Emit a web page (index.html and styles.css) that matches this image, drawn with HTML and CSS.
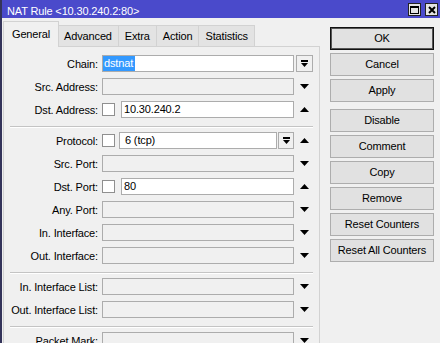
FILE: index.html
```html
<!DOCTYPE html>
<html>
<head>
  <title>NAT Rule</title>
  <link rel="stylesheet" href="styles.css">
</head>
<body>
  <div class="window">
    <div class="titlebar">
      <span class="title">NAT Rule &lt;10.30.240.2:80&gt;</span>
      <div class="wbtns">
        <span class="wbtn"><svg width="9" height="8" viewBox="0 0 9 8"><rect x="0.5" y="0.5" width="8" height="7" fill="none" stroke="#000"/><rect x="0" y="0" width="9" height="2" fill="#000"/></svg></span>
        <span class="wbtn"><svg width="8" height="8" viewBox="0 0 8 8"><path d="M1 1 L7 7 M7 1 L1 7" stroke="#000" stroke-width="2"/></svg></span>
      </div>
    </div>

    <div class="content">
      <div class="left">
        <div class="tabs">
          <div class="tab active">General</div>
          <div class="tab">Advanced</div>
          <div class="tab">Extra</div>
          <div class="tab">Action</div>
          <div class="tab">Statistics</div>
        </div>

        <div class="panel">
          <div class="row">
            <div class="lbl">Chain:</div>
            <div class="ctl"><div class="field on chain"><span class="sel">dstnat</span></div></div>
            <div class="side"><span class="dd chain-dd"><svg width="7" height="7" viewBox="0 0 7 7"><rect x="0" y="0" width="7" height="2" fill="#000"/><polygon points="0,3 7,3 3.5,7" fill="#000"/></svg></span></div>
          </div>
          <div class="row">
            <div class="lbl">Src. Address:</div>
            <div class="ctl"><div class="field"></div></div>
            <div class="side"><svg class="tri" width="9" height="5" viewBox="0 0 9 5"><polygon points="0,0 9,0 4.5,5" fill="#000"/></svg></div>
          </div>
          <div class="row">
            <div class="lbl">Dst. Address:</div>
            <div class="ctl"><span class="chk"></span><div class="field on">10.30.240.2</div></div>
            <div class="side"><svg class="tri" width="9" height="5" viewBox="0 0 9 5"><polygon points="0,5 9,5 4.5,0" fill="#000"/></svg></div>
          </div>

          <div class="sep"></div>

          <div class="row">
            <div class="lbl">Protocol:</div>
            <div class="ctl combo"><span class="chk"></span><div class="field on">6 (tcp)</div><span class="dd"><svg width="7" height="7" viewBox="0 0 7 7"><rect x="0" y="0" width="7" height="2" fill="#000"/><polygon points="0,3 7,3 3.5,7" fill="#000"/></svg></span></div>
            <div class="side"><svg class="tri" width="9" height="5" viewBox="0 0 9 5"><polygon points="0,5 9,5 4.5,0" fill="#000"/></svg></div>
          </div>
          <div class="row">
            <div class="lbl">Src. Port:</div>
            <div class="ctl"><div class="field"></div></div>
            <div class="side"><svg class="tri" width="9" height="5" viewBox="0 0 9 5"><polygon points="0,0 9,0 4.5,5" fill="#000"/></svg></div>
          </div>
          <div class="row">
            <div class="lbl">Dst. Port:</div>
            <div class="ctl"><span class="chk"></span><div class="field on">80</div></div>
            <div class="side"><svg class="tri" width="9" height="5" viewBox="0 0 9 5"><polygon points="0,5 9,5 4.5,0" fill="#000"/></svg></div>
          </div>
          <div class="row">
            <div class="lbl">Any. Port:</div>
            <div class="ctl"><div class="field"></div></div>
            <div class="side"><svg class="tri" width="9" height="5" viewBox="0 0 9 5"><polygon points="0,0 9,0 4.5,5" fill="#000"/></svg></div>
          </div>
          <div class="row">
            <div class="lbl">In. Interface:</div>
            <div class="ctl"><div class="field"></div></div>
            <div class="side"><svg class="tri" width="9" height="5" viewBox="0 0 9 5"><polygon points="0,0 9,0 4.5,5" fill="#000"/></svg></div>
          </div>
          <div class="row">
            <div class="lbl">Out. Interface:</div>
            <div class="ctl"><div class="field"></div></div>
            <div class="side"><svg class="tri" width="9" height="5" viewBox="0 0 9 5"><polygon points="0,0 9,0 4.5,5" fill="#000"/></svg></div>
          </div>

          <div class="sep"></div>

          <div class="row">
            <div class="lbl">In. Interface List:</div>
            <div class="ctl"><div class="field"></div></div>
            <div class="side"><svg class="tri" width="9" height="5" viewBox="0 0 9 5"><polygon points="0,0 9,0 4.5,5" fill="#000"/></svg></div>
          </div>
          <div class="row">
            <div class="lbl">Out. Interface List:</div>
            <div class="ctl"><div class="field"></div></div>
            <div class="side"><svg class="tri" width="9" height="5" viewBox="0 0 9 5"><polygon points="0,0 9,0 4.5,5" fill="#000"/></svg></div>
          </div>

          <div class="sep"></div>

          <div class="row">
            <div class="lbl">Packet Mark:</div>
            <div class="ctl"><div class="field"></div></div>
            <div class="side"><svg class="tri" width="9" height="5" viewBox="0 0 9 5"><polygon points="0,0 9,0 4.5,5" fill="#000"/></svg></div>
          </div>
        </div>
      </div>

      <div class="actions">
        <div class="btn def">OK</div>
        <div class="btn">Cancel</div>
        <div class="btn gap">Apply</div>
        <div class="btn">Disable</div>
        <div class="btn">Comment</div>
        <div class="btn">Copy</div>
        <div class="btn">Remove</div>
        <div class="btn">Reset Counters</div>
        <div class="btn">Reset All Counters</div>
      </div>
    </div>
  </div>
</body>
</html>
```

FILE: styles.css
```css
body {
  margin: 0;
  font-family: "Liberation Sans", Arial, sans-serif;
  font-size: 11px;
  letter-spacing: -0.15px;
  color: #000;
  background-color: #f0f0f0;
}
.window {
  width: 440px;
  height: 343px;
  overflow: hidden;
  box-sizing: border-box;
  background-color: #f0f0f0;
  border-left: 2px solid #34345a;
}
.titlebar {
  display: flex;
  height: 18px;
  padding-left: 5px;
  background-color: #4a4acb;
  color: white;
}
.title {
  padding-top: 5px;
  line-height: 13px;
}
.wbtns {
  margin-left: auto;
  display: flex;
  gap: 4px;
  padding-top: 3px;
  padding-right: 2px;
}
.wbtn {
  width: 13px;
  height: 13px;
  box-sizing: border-box;
  border: 1px solid #222;
  background-color: #e4e4e4;
  display: flex;
  align-items: center;
  justify-content: center;
}
.content {
  display: flex;
  padding: 3px 0 0 1px;
}
.left {
  width: 317px;
}
.tabs {
  display: flex;
  align-items: flex-end;
  height: 25px;
}
.tab {
  height: 21px;
  box-sizing: border-box;
  padding: 0 6px;
  margin-left: -1px;
  line-height: 20px;
  background-color: #e3e3e3;
  border: 1px solid #d2d2d2;
  border-bottom: none;
}
.tab.active {
  position: relative;
  z-index: 1;
  height: 26px;
  margin-left: 0;
  margin-bottom: -1px;
  margin-right: -1px;
  padding: 2px 8px 0;
  background-color: #f0f0f0;
}
.panel {
  display: flex;
  flex-direction: column;
  height: 300px;
  padding-top: 8px;
  border: 1px solid #d2d2d2;
  border-bottom: none;
}
.row {
  display: flex;
  align-items: center;
  flex: none;
  height: 17px;
  margin-bottom: 6px;
}
.lbl {
  width: 94px;
  flex: none;
  text-align: right;
  white-space: nowrap;
}
.ctl {
  display: flex;
  align-items: center;
  width: 192px;
  height: 17px;
  margin-left: 4px;
  flex: none;
}
.field {
  flex: 1;
  height: 17px;
  box-sizing: border-box;
  padding-left: 2px;
  line-height: 15px;
  border: 1px solid #acacac;
  background-color: #f0f0f0;
  white-space: nowrap;
  overflow: hidden;
}
.field.on {
  background-color: white;
}
.field.chain {
  padding-left: 0;
}
.sel {
  display: inline-block;
  height: 15px;
  padding: 0 2px 0 1px;
  background-color: #3399ff;
  color: white;
}
.chk {
  width: 13px;
  height: 13px;
  flex: none;
  box-sizing: border-box;
  margin-right: 6px;
  border: 1px solid #8f8f8f;
  background-color: white;
}
.combo .chk {
  margin-right: 4px;
}
.combo .field {
  padding-left: 5px;
}
.dd {
  width: 16px;
  height: 17px;
  flex: none;
  box-sizing: border-box;
  margin-left: 1px;
  border: 1px solid #acacac;
  background-color: #f0f0f0;
  display: flex;
  align-items: center;
  justify-content: center;
}
.side {
  width: 20px;
  height: 17px;
  flex: none;
  display: flex;
  align-items: center;
  justify-content: center;
}
.chain-dd {
  width: 17px;
  margin-left: 0;
}
.sep {
  flex: none;
  margin: 2px 6px 4px;
  border-top: 1px solid #c4c4c4;
  border-bottom: 1px solid #fff;
}
.actions {
  display: flex;
  flex-direction: column;
  gap: 3px;
  width: 104px;
  margin-left: 10px;
  padding-top: 6px;
}
.btn {
  height: 23px;
  box-sizing: border-box;
  line-height: 21px;
  text-align: center;
  border: 1px solid #adadad;
  background-color: #e1e1e1;
}
.btn.def {
  border-color: #111;
  box-shadow: inset 0 0 0 1px #555;
}
.btn.gap {
  margin-bottom: 4px;
}
```
